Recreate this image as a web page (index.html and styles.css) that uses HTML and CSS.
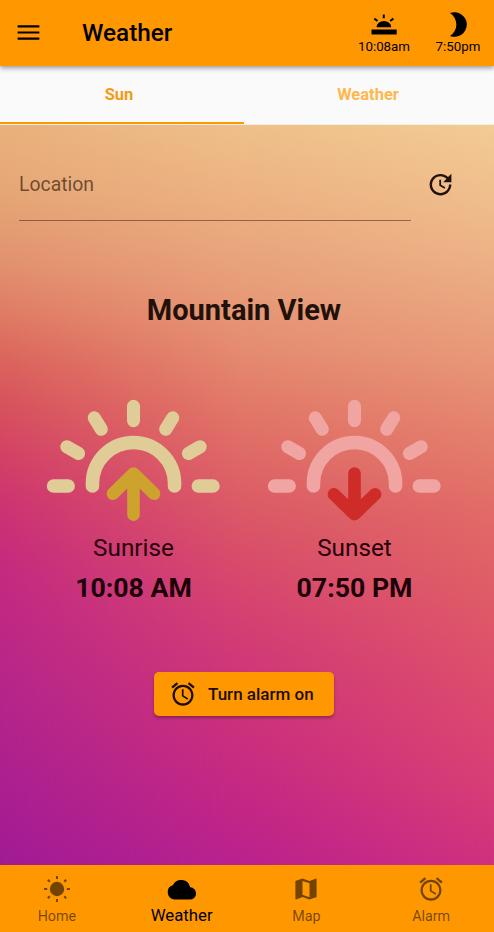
FILE: index.html
```html
<!DOCTYPE html>
<html lang="en">
<head>
<meta charset="utf-8">
<title>Weather</title>
<link rel="stylesheet" href="styles.css">
</head>
<body>
<svg class="defs" width="0" height="0">
  <defs>
    <symbol id="alarm" viewBox="0 0 24 24">
      <path d="M22 5.72l-4.600-3.860-1.290 1.530 4.600 3.860L22 5.720zM7.880 3.390L6.600 1.860 2 5.710l1.290 1.530 4.590-3.850zM12.500 8H11v6l4.750 2.850.75-1.230-4-2.370V8zM12 4c-4.970 0-9 4.030-9 9s4.020 9 9 9c4.970 0 9-4.030 9-9s-4.030-9-9-9zm0 16c-3.870 0-7-3.130-7-7s3.130-7 7-7 7 3.130 7 7-3.130 7-7 7z"/>
    </symbol>
    <symbol id="halfsun" viewBox="0 0 174 122">
      <g fill="none" stroke="currentColor" stroke-linecap="round">
        <path stroke-width="13.500" d="M46.200 86.500V84a40.800 40.800 0 0 1 81.600 0v2.500"/>
        <path stroke-width="13.500" d="M7.500 86.500h14.500M151.500 86.500H166"/>
        <path stroke-width="13" d="M87 7.300v14.200M48 18.700l7 11.400M126 18.700l-7 11.400M20.700 47.500l11.700 6.700M153.300 47.500l-11.700 6.700"/>
      </g>
    </symbol>
  </defs>
</svg>
<div class="app">
  <header class="bar">
    <svg class="menu" viewBox="0 0 24 24"><path d="M3 18h18v-1.800H3V18zm0-5.100h18v-1.800H3v1.800zM3 6v1.800h18V6H3z"/></svg>
    <h1>Weather</h1>
    <div class="stat stat-rise">
      <svg viewBox="0 0 26 26"><path d="M.5 18.600H25.700v5H.5zM5.600 16.200a7.300 6.200 0 0 1 14.600 0z"/><path stroke="currentColor" stroke-width="2" d="M12.800 3.600v3.600M3.300 7.600l3.200 2.400M22.400 7.600l-3.200 2.400"/></svg>
      <span>10:08am</span>
    </div>
    <div class="stat">
      <svg viewBox="0 0 26 26"><path d="M5 2.100A12.300 12.300 0 1 1 5 25a13.500 13.500 0 0 0 0-22.900z"/></svg>
      <span>7:50pm</span>
    </div>
  </header>
  <nav class="tabs"><a class="tab on">Sun</a><a class="tab">Weather</a></nav>
  <main>
    <div class="search">
      <div class="field">Location</div>
      <svg viewBox="0 0 24 24"><path d="M21 10.120h-6.780l2.740-2.820c-2.730-2.700-7.150-2.800-9.880-.1-2.730 2.710-2.730 7.080 0 9.790s7.150 2.710 9.880 0C18.320 15.650 19 14.080 19 12.100h2c0 1.980-.88 4.550-2.640 6.290-3.510 3.480-9.210 3.480-12.720 0-3.500-3.470-3.530-9.110-.02-12.580s9.140-3.470 12.650 0L21 3v7.120zM12.500 8v4.250l3.500 2.080-.72 1.210L11 13V8h1.500z"/></svg>
    </div>
    <h2>Mountain View</h2>
    <div class="times">
      <section>
        <svg class="sun rise" viewBox="0 0 174 122"><use href="#halfsun"/><path class="arrow" d="M87 115V75M66.500 94.200L87 74l20.500 20.200"/></svg>
        <p>Sunrise</p><strong>10:08 AM</strong>
      </section>
      <section>
        <svg class="sun set" viewBox="0 0 174 122"><use href="#halfsun"/><path class="arrow" d="M87 74v40M66.500 94.800L87 114.500l20.500-19.700"/></svg>
        <p>Sunset</p><strong>07:50 PM</strong>
      </section>
    </div>
    <button><svg viewBox="0 0 24 24"><use href="#alarm"/></svg>Turn alarm on</button>
  </main>
  <nav class="bottom">
    <a><svg viewBox="0 0 28 28"><circle cx="14" cy="14" r="7.200"/><path stroke="currentColor" stroke-width="2" d="M14 1v3M14 24v3M1 14h3.200M23.800 14H27M4.800 4.800l2 2M21.200 21.200l2 2M4.800 23.200l2-2M21.200 6.800l2-2"/></svg>Home</a>
    <a class="on"><svg viewBox="0 0 30 28"><path d="M23.200 12.300A9.200 9.200 0 0 0 6 10 7.500 7.500 0 0 0 7.200 24.600h15.500a6.100 6.100 0 0 0 .5-12.300z"/></svg>Weather</a>
    <a><svg viewBox="0 0 28 28"><path fill-rule="evenodd" d="M24.200 3.500l-.2.100-6.500 2.400-7-2.400L3.900 5.700c-.3.100-.5.300-.5.600V24c0 .4.300.6.600.6l.2-.1 6.300-2.400 7 2.400 6.600-2.200c.3-.1.500-.3.500-.6V4.100c0-.4-.2-.6-.4-.6zM17.500 22.200l-7-2.400V5.900l7 2.400v13.900z"/></svg>Map</a>
    <a><svg class="alarm" viewBox="0 0 24 24"><use href="#alarm"/></svg>Alarm</a>
  </nav>
</div>
</body>
</html>
```
FILE: styles.css
```css
* { box-sizing: border-box; }
body { margin: 0; font-family: Roboto, "Liberation Sans", sans-serif; color: #000; }
svg { fill: currentColor; display: block; }
.defs { position: absolute; }
h1, h2, p { margin: 0; }
.app { width: 494px; height: 932px; display: flex; flex-direction: column; overflow: hidden; background: #ff9800; }

.bar { height: 66px; flex: none; background: #ff9800; display: flex; align-items: center; padding-left: 14px; position: relative; z-index: 1; box-shadow: 0 2px 5px rgba(0,0,0,.4); }
.menu { width: 29px; height: 29px; margin-top: -2px; }
h1 { font-size: 24.300px; font-weight: 500; margin-left: 39px; line-height: 30px; }
.stat { width: 74px; display: flex; flex-direction: column; align-items: center; font-size: 13.300px; line-height: 16px; margin-right: -1px; }
.stat svg { width: 26px; height: 26px; margin-top: -1px; margin-bottom: 2px; }
.stat-rise { margin-left: auto; margin-right: 0; }

.tabs { height: 59px; flex: none; display: flex; background: #fafafa; border-bottom: 1px solid #eee; }
.tab { flex: 1; height: 58px; display: flex; align-items: center; justify-content: center; font-size: 16.500px; font-weight: 700; color: #ffb74d; padding: 0 2px 2px 0; }
.tab.on { flex: none; width: 244px; color: #f59b14; padding: 1px 6px 0 0; border-bottom: 2px solid #ff9800; }

main { flex: 1; position: relative; z-index: 0; display: flex; flex-direction: column; background: linear-gradient(#e9b17c 0, #e6a676 70px, #e2906e 142px, #e07b64 189px, #db635d 236px, #d7515e 283px, #d34166 330px, #cd3471 378px, #c72c7c 425px, #c02884 480px, #b6258a 566px, #ac2090 650px, #a11b95 740px); }
main::before, main::after { content: ""; position: absolute; inset: 0; z-index: -1; }
main::before { background: linear-gradient(#efc08a 0, #ecb182 75px, #e8a07a 150px, #e58c71 225px, #e27868 283px, #df6a66 330px, #dc5c66 378px, #d94f69 425px, #d6456f 472px, #d13a76 530px, #cb2f7d 614px, #c22686 690px, #ba228e 740px); -webkit-mask-image: linear-gradient(90deg, transparent, #000 50%); mask-image: linear-gradient(90deg, transparent, #000 50%); }
main::after { background: linear-gradient(#f3cb94 0, #edb487 120px, #e89b79 220px, #e4806d 310px, #e16a66 390px, #df5a67 480px, #dc4b6d 570px, #d83e75 660px, #d0307e 740px); -webkit-mask-image: linear-gradient(90deg, transparent 50%, #000); mask-image: linear-gradient(90deg, transparent 50%, #000); }
.search { display: flex; padding: 22.500px 39px 0 19px; justify-content: space-between; }
.field { width: 392px; height: 73px; border-bottom: 1px solid rgba(60,25,10,.5); font-size: 19.400px; line-height: 73px; color: rgba(30,10,0,.62); }
.search svg { width: 29px; height: 29px; margin-top: 22px; color: #201208; }
h2 { text-align: center; font-size: 29px; font-weight: 700; line-height: 36px; margin: 71.500px 6px 0 0; color: #201208; }
.times { display: flex; padding: 71px 0 0 23px; }
section { width: 221px; display: flex; flex-direction: column; align-items: center; }
.sun { width: 175px; height: 122.700px; }
.rise { color: #dfcc96; }
.set { color: #f0a5a3; }
.arrow { fill: none; stroke: #cda32e; stroke-width: 12.500; stroke-linecap: round; stroke-linejoin: round; }
.set .arrow { stroke: #cf2b28; }
section p { font-size: 24.300px; line-height: 30px; margin-top: 11.300px; color: #28000b; }
section strong { font-size: 26.700px; line-height: 34px; margin-top: 8.500px; color: #1b0008; }
button { align-self: center; width: 180px; height: 44px; margin: 66.500px 6px 0 0; padding: 0 0 0 15px; display: flex; align-items: center; border: 0; border-radius: 5px; background: #ff9800; font: 500 17px Roboto, sans-serif; color: #1c0d00; box-shadow: 0 2px 3px rgba(0,0,0,.3); }
button svg { width: 28px; height: 28px; margin-right: 11px; }

.bottom { height: 67px; flex: none; display: flex; margin-left: -5.500px; width: 499px; }
.bottom a { flex: 1; display: flex; flex-direction: column; align-items: center; padding-top: 10px; font-size: 14.300px; line-height: 20px; color: rgba(0,0,0,.55); }
.bottom svg { width: 28px; height: 28px; margin-bottom: 3px; }
.bottom a.on { color: #000; font-size: 16.800px; }
.bottom .on svg { width: 30px; margin-bottom: 2px; }
```
